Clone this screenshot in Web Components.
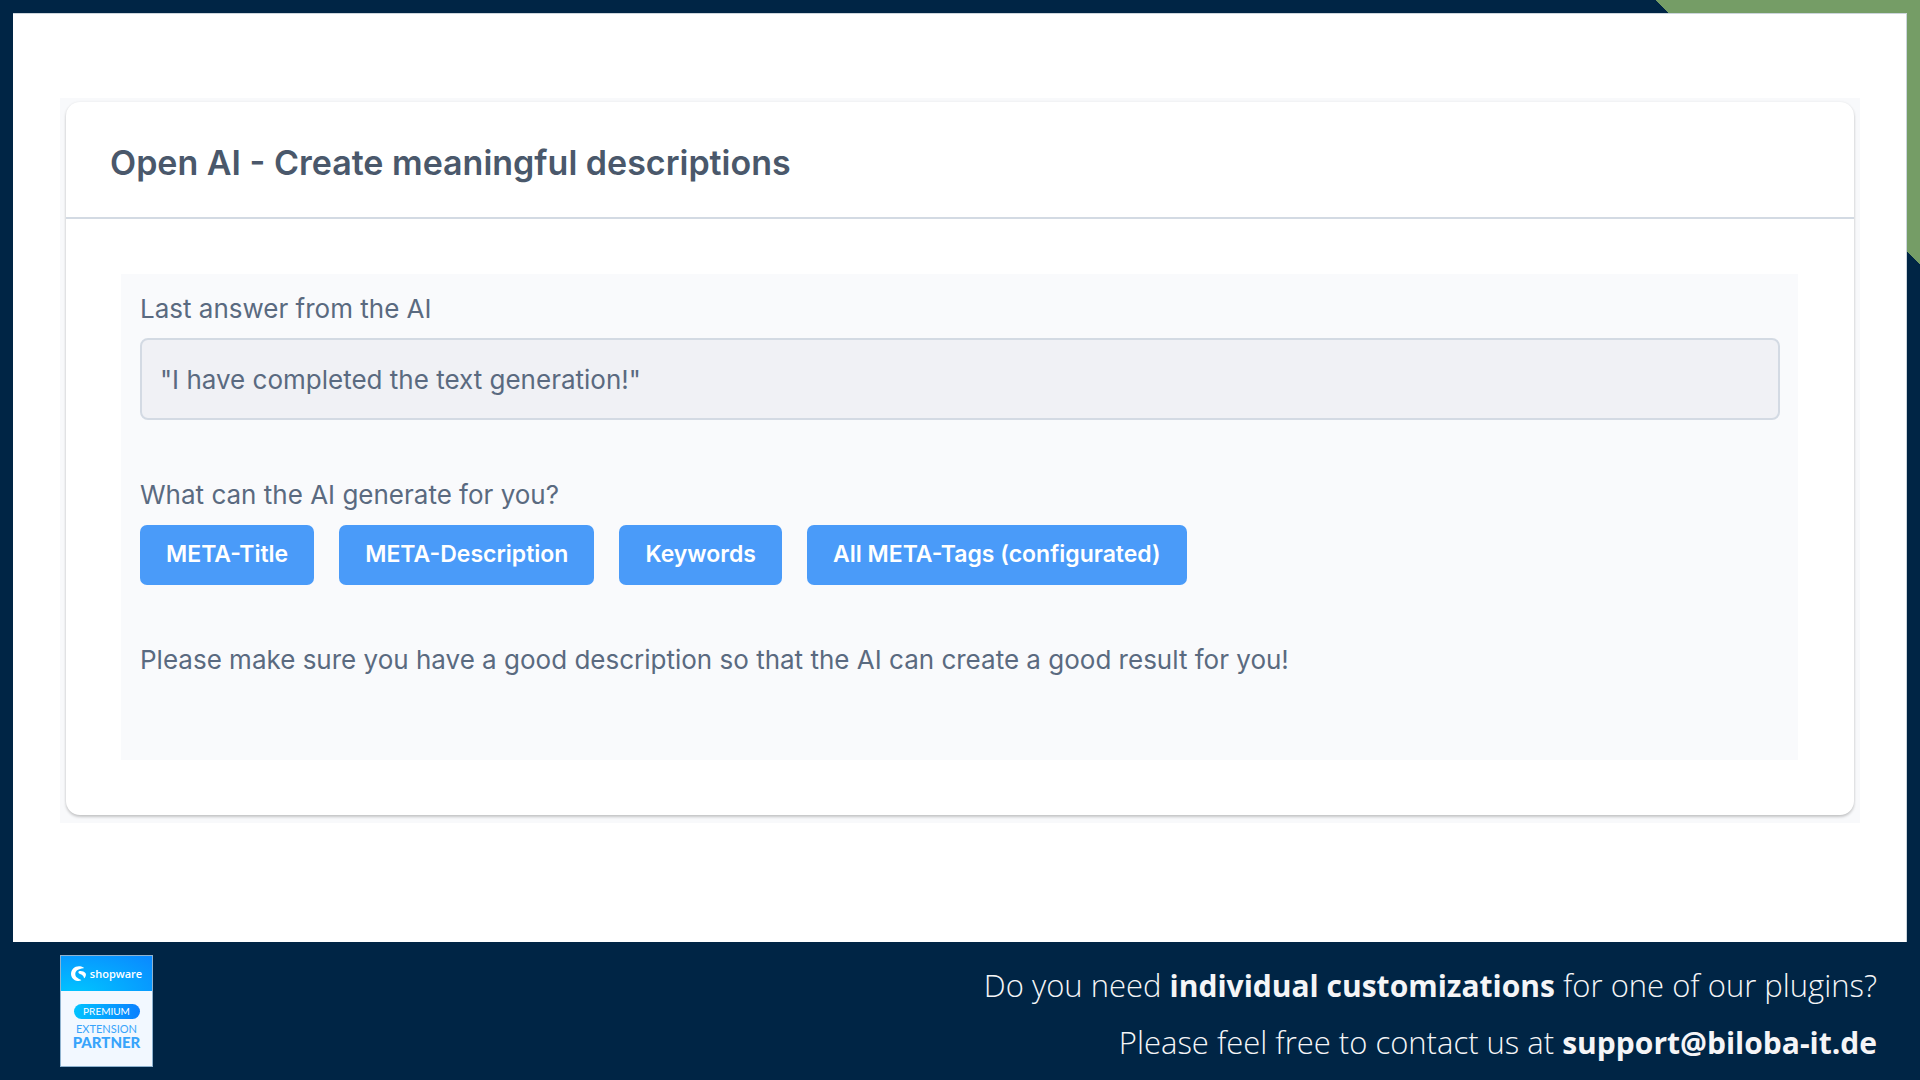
<!DOCTYPE html>
<html lang="en">
<head>
<meta charset="utf-8">
<title>Open AI - Create meaningful descriptions</title>
<style>
  body { margin: 0; font-family: Inter, "Liberation Sans", sans-serif; }
</style>
</head>
<body>
<promo-page>
  <ai-card heading="Open AI - Create meaningful descriptions">
    <answer-field label="Last answer from the AI" value='"I have completed the text generation!"'></answer-field>
    <generate-group label="What can the AI generate for you?">
      <action-button>META-Title</action-button>
      <action-button>META-Description</action-button>
      <action-button>Keywords</action-button>
      <action-button>All META-Tags (configurated)</action-button>
    </generate-group>
    <span slot="hint">Please make sure you have a good description so that the AI can create a good result for you!</span>
  </ai-card>
  <partner-badge slot="footer"></partner-badge>
  <contact-note slot="footer"></contact-note>
</promo-page>
<script>
const define = (name, html, setup) => {
  const template = document.createElement('template');
  template.innerHTML = html;
  customElements.define(name, class extends HTMLElement {
    connectedCallback() {
      if (this.shadowRoot) return;
      const root = this.attachShadow({ mode: 'open' });
      root.append(template.content.cloneNode(true));
      if (setup) setup(this, root);
    }
  });
};

define('promo-page', `
  <style>
    :host {
      display: flex; flex-direction: column; box-sizing: border-box; min-height: 100vh;
      padding: 13px 13px 0;
      background: linear-gradient(to top right, #002545 50%, #759d66 50%) top right / 264px 264px no-repeat, #002545;
    }
    main {
      flex: 1; box-sizing: border-box; padding: 84px 46px 0 47px;
      background: #fff; border-top: 1px solid #ccd5dc; border-right: 1px solid #ccd5dc;
    }
    footer {
      display: flex; justify-content: space-between; align-items: flex-start;
      padding: 13px 30px 9px 47px;
    }
  </style>
  <main><slot></slot></main>
  <footer><slot name="footer"></slot></footer>
`);

define('ai-card', `
  <style>
    :host { display: block; padding: 4px 6px 8px; background: #f8f9fb; }
    article {
      background: #fff; border-radius: 14px;
      box-shadow: 0 2px 3px rgba(0,0,0,.2), 0 0 3px rgba(0,0,0,.06);
    }
    header { padding: 41px 44px 34px; border-bottom: 2px solid #d3dae3; }
    h1 { margin: 0; font-size: 34px; line-height: 40px; font-weight: 600; color: #4a586b; }
    .body { padding: 55px 56px 55px 55px; }
    .panel {
      display: flex; flex-direction: column; gap: 59px;
      padding: 19px 18px 84px 19px; background: #f9fafc;
    }
    p { margin: 0; font-size: 26px; line-height: 32px; color: #5a6a80; }
  </style>
  <article>
    <header><h1></h1></header>
    <div class="body"><div class="panel"><slot></slot><p><slot name="hint"></slot></p></div></div>
  </article>
`, (host, root) => { root.querySelector('h1').textContent = host.getAttribute('heading'); });

define('answer-field', `
  <style>
    :host { display: flex; flex-direction: column; gap: 13px; }
    label { font-size: 26px; line-height: 32px; color: #5a6a80; }
    input {
      box-sizing: border-box; width: 100%; height: 82px; margin: 0; padding: 0 18px;
      font: 26px/32px Inter, sans-serif; color: #5a6a80;
      background: #f0f1f5; border: 2px solid #d3dae3; border-radius: 8px;
    }
  </style>
  <label for="answer"></label>
  <input id="answer" type="text" readonly>
`, (host, root) => {
  root.querySelector('label').textContent = host.getAttribute('label');
  root.querySelector('input').value = host.getAttribute('value');
});

define('generate-group', `
  <style>
    :host { display: flex; flex-direction: column; gap: 14px; }
    .label { font-size: 26px; line-height: 32px; color: #5a6a80; }
    .row { display: flex; flex-wrap: wrap; gap: 25px; }
  </style>
  <div class="label" id="label"></div>
  <div class="row" role="group" aria-labelledby="label"><slot></slot></div>
`, (host, root) => { root.querySelector('.label').textContent = host.getAttribute('label'); });

define('action-button', `
  <style>
    :host { display: block; }
    button {
      display: block; height: 60px; margin: 0; padding: 0 26px 2px; border: 0; border-radius: 7px;
      background: #4a9bf9; color: #fff; font: 600 23px/28px Inter, sans-serif; cursor: pointer;
    }
  </style>
  <button type="button"><slot></slot></button>
`);

define('partner-badge', `
  <style>
    :host {
      display: flex; flex-direction: column; box-sizing: border-box; width: 93px; height: 112px;
      border: 1px solid #8fb3cf; background: #f2f8ff; color: #38a4fb;
      font-family: Lato, sans-serif; text-align: center;
    }
    .brand {
      display: flex; align-items: center; justify-content: center; gap: 4px; height: 35px;
      background: radial-gradient(ellipse at 15% 110%, #00c6ff, #0a8bff 95%);
      color: #fff; font: 600 11px/16px "Open Sans", sans-serif;
    }
    .level {
      align-self: center; width: 66px; margin-top: 13px; border-radius: 8px;
      background: linear-gradient(90deg, #00c3ff, #0a80ff);
      color: #fff; font-size: 10px; line-height: 15px;
    }
    .kind { margin-top: 3px; font-size: 11px; line-height: 13px; }
    .role { font-size: 15px; line-height: 15px; font-weight: 900; }
  </style>
  <div class="brand">
    <svg width="15" height="15" viewBox="0 0 15 15" aria-hidden="true">
      <path fill="#fff" d="M12.6 1.6C9.4-.6 4.800-.2 2.200 2.400-.4 5-.7 9.300 1.500 12.200 3.500 14.800 6.900 15.700 9.900 14.500c.4-.2.4-.5.1-.7C7.900 12.600 4.400 11.600 4.300 8.200 4.200 4.700 7.600 2.900 12.400 2.300c.5 0 .6-.4.2-.7Z"/>
      <path fill="#fff" d="M14.600 7.200C13.200 5.500 10.900 4.700 8.600 5c-1.500.2-1.600 1.800-.4 2.500 1.900 1.100 4.200 1.300 4.700 4.200.1.600.6.600.9.100 1-1.500 1.500-3.200.8-4.600Z"/>
    </svg>
    <span>shopware</span>
  </div>
  <div class="level">PREMIUM</div>
  <div class="kind">EXTENSION</div>
  <div class="role">PARTNER</div>
`);

define('contact-note', `
  <style>
    :host {
      display: block; padding-top: 2px; text-align: right; color: #f5f5f7;
      font: 300 31px/57px "Open Sans", sans-serif;
    }
    p { margin: 0; }
    strong, a { font-size: 30px; font-weight: 700; line-height: 1; }
    a { color: inherit; text-decoration: none; }
  </style>
  <p>Do you need <strong>individual customizations</strong> for one of our plugins?</p>
  <p>Please feel free to contact us at <a href="mailto:support@biloba-it.de">support@biloba-it.de</a></p>
`);
</script>
</body>
</html>
